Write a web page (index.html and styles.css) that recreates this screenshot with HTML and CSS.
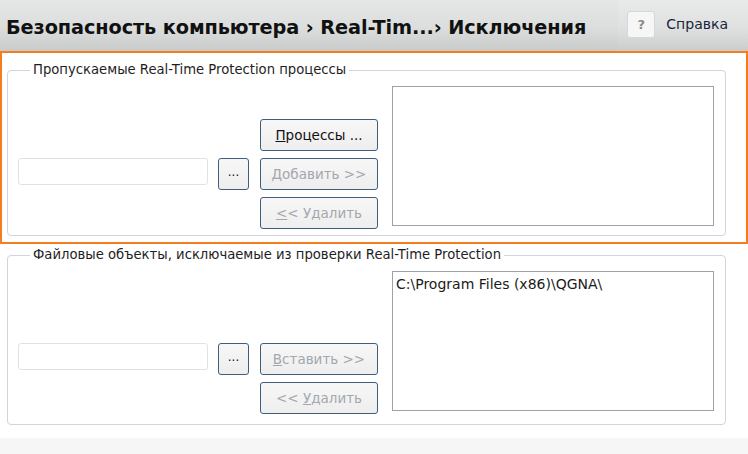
FILE: index.html
```html
<!DOCTYPE html>
<html lang="ru">
<head>
    <meta charset="UTF-8">
    <title>Исключения</title>
    <link rel="stylesheet" href="styles.css">
</head>
<body>
    <header class="topbar">
        <h1 class="crumbs">Безопасность компьютера › Real-Tim...› Исключения</h1>
        <div class="help">
            <span class="help-icon">?</span>
            <span class="help-label">Справка</span>
        </div>
    </header>

    <div class="focus">
        <fieldset class="group group-first">
            <legend>Пропускаемые Real-Time Protection процессы</legend>
            <div class="row">
                <div class="entry">
                    <input class="field" type="text">
                    <button class="btn btn-dots">...</button>
                </div>
                <div class="actions">
                    <button class="btn"><u>П</u>роцессы ...</button>
                    <button class="btn" disabled><u>Д</u>обавить &gt;&gt;</button>
                    <button class="btn" disabled><u>&lt;</u>&lt; Удалить</button>
                </div>
                <div class="list"></div>
            </div>
        </fieldset>
    </div>

    <fieldset class="group group-second">
        <legend>Файловые объекты, исключаемые из проверки Real-Time Protection</legend>
        <div class="row">
            <div class="entry">
                <input class="field" type="text">
                <button class="btn btn-dots">...</button>
            </div>
            <div class="actions">
                <button class="btn" disabled><u>В</u>ставить &gt;&gt;</button>
                <button class="btn" disabled>&lt;&lt; <u>У</u>далить</button>
            </div>
            <div class="list">
                <div class="list-item">C:\Program Files (x86)\QGNA\</div>
            </div>
        </div>
    </fieldset>

    <div class="footer"></div>
</body>
</html>
```

FILE: styles.css
```css
* {
    margin: 0;
    padding: 0;
    box-sizing: border-box;
}
body {
    background: white;
    font-family: "DejaVu Sans", Verdana, sans-serif;
    font-size: 13px;
    color: #1b1b1b;
    width: 748px;
    height: 454px;
    overflow: hidden;
}
.topbar {
    height: 51px;
    background: linear-gradient(#e5e7e7, #dcdede 55%, #c9caca);
    display: flex;
    align-items: center;
    padding: 0 0 0 6px;
}
.crumbs {
    font-size: 19.3px;
    font-weight: bold;
    color: #111;
    letter-spacing: -0.1px;
    flex: 1;
    margin-top: 4px;
    white-space: nowrap;
}
.help {
    display: flex;
    align-items: center;
    align-self: stretch;
    padding: 0 20px 3px 9px;
    background: linear-gradient(rgba(255,255,255,0.12), rgba(255,255,255,0.04));
}
.help-icon {
    width: 28px;
    height: 27px;
    border: 1px solid #d6d7d7;
    border-radius: 3px;
    background: #f6f6f6;
    color: #8a8a8a;
    font-weight: bold;
    font-size: 13px;
    display: flex;
    align-items: center;
    justify-content: center;
    margin-right: 11px;
}
.help-label {
    font-size: 14px;
    color: #18243c;
}
.focus {
    border: 2px solid #f67d1d;
    height: 193px;
    padding: 9px 20px 0 5px;
}
.group {
    border: 1px solid #d3d3df;
    border-radius: 4px;
    padding: 8px 11px 6px 10px;
}
.group legend {
    margin-left: 12px;
    padding: 0 3px;
    line-height: 16px;
    font-size: 13.2px;
    color: #1e1e1e;
}
.group-second {
    margin: 3px 22px 0 7px;
    padding-bottom: 10px;
}
.row {
    display: flex;
    align-items: flex-end;
}
.entry {
    display: flex;
    align-items: flex-start;
    gap: 10px;
    margin-bottom: 39px;
}
.field {
    width: 190px;
    height: 27px;
    border: 1px solid #dfe2e6;
    border-radius: 3px;
    background: white;
}
.btn {
    height: 32px;
    border: 1.5px solid #3f5e7e;
    border-radius: 3px;
    background: linear-gradient(#f7f7f7, #eeeeee);
    font-family: inherit;
    font-size: 13.5px;
    color: #111;
    white-space: nowrap;
}
.btn:disabled {
    color: #a3a8ad;
}
.btn-dots {
    width: 31px;
    padding-bottom: 4px;
    font-size: 12px;
}
.actions {
    display: flex;
    flex-direction: column;
    gap: 7px;
    width: 118px;
    margin-left: 11px;
}
.list {
    width: 322px;
    height: 140px;
    border: 1px solid #9ca2a8;
    margin-left: 14px;
    margin-bottom: 3px;
    padding: 3px 3px;
}
.list-item {
    font-size: 14px;
    line-height: 18px;
}
.footer {
    height: 18px;
    background: #f6f6f6;
    margin-top: 13px;
}
```
